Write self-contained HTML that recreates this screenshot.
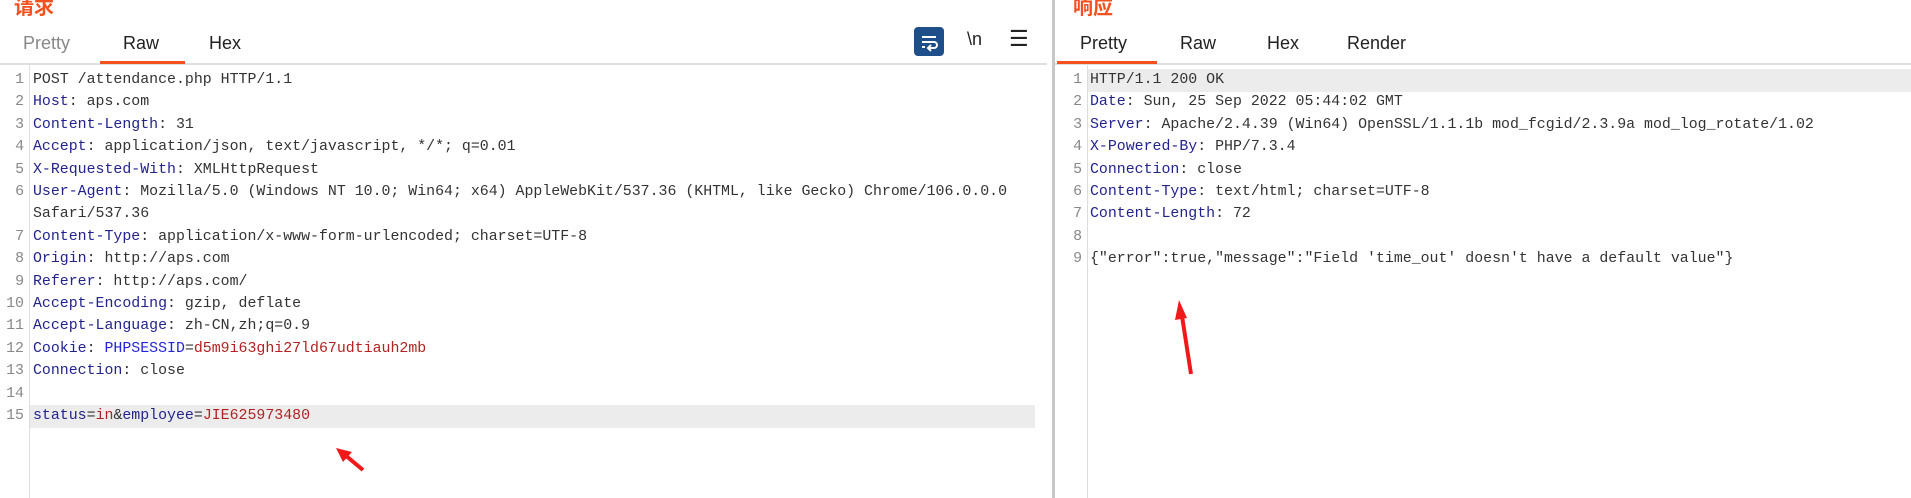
<!DOCTYPE html>
<html><head><meta charset="utf-8"><style>
*{margin:0;padding:0;box-sizing:border-box}
body{width:1911px;height:498px;background:#fff;position:relative;overflow:hidden;font-family:"Liberation Sans","Noto Sans CJK SC",sans-serif}
.t{position:absolute;font-size:18px;color:#222}
.title{position:absolute;top:-9px;font-size:20px;font-weight:bold;color:#f4511e;font-family:"Noto Sans CJK SC",sans-serif}
.ln{position:absolute;font-family:"Liberation Mono",monospace;font-size:14.9px;color:#888;text-align:right;width:24px}
.c{position:absolute;font-family:"Liberation Mono",monospace;font-size:14.9px;color:#333;white-space:pre;line-height:22px}
.k{color:#23238f}.b{color:#2525d6}.r{color:#b22222}
</style></head><body>
<div class="title" style="left:14px">请求</div>
<div class="title" style="left:1073px">响应</div>
<div class="t" style="left:23px;top:33px;color:#888">Pretty</div>
<div class="t" style="left:123px;top:33px">Raw</div>
<div class="t" style="left:209px;top:33px">Hex</div>
<div style="position:absolute;left:0;top:63px;width:1047px;height:2px;background:#dde0e4"></div>
<div style="position:absolute;left:100px;top:61px;width:85px;height:3px;background:#f4511e"></div>
<div style="position:absolute;left:914px;top:27px;width:30px;height:29px;background:#1f4f8a;border-radius:4px"></div>
<svg style="position:absolute;left:914px;top:27px" width="30" height="29"><path d="M8 10h14 M8 15h12a3 3 0 0 1 0 6h-5 M17 18l-3 3 3 3 M8 20h3" stroke="#fff" stroke-width="2" fill="none"/></svg>
<div class="t" style="left:967px;top:29px;font-size:18px;color:#222">\n</div>
<div class="t" style="left:1009px;top:26px;font-size:22px;color:#222">☰</div>
<div style="position:absolute;left:1052px;top:0;width:3px;height:498px;background:#c8c8c8"></div>
<div class="t" style="left:1080px;top:33px">Pretty</div>
<div class="t" style="left:1180px;top:33px">Raw</div>
<div class="t" style="left:1267px;top:33px">Hex</div>
<div class="t" style="left:1347px;top:33px">Render</div>
<div style="position:absolute;left:1055px;top:63px;width:856px;height:2px;background:#dde0e4"></div>
<div style="position:absolute;left:1057px;top:61px;width:100px;height:3px;background:#f4511e"></div>
<div style="position:absolute;left:29px;top:65px;width:1px;height:433px;background:#ddd"></div>
<div style="position:absolute;left:1087px;top:65px;width:1px;height:433px;background:#ddd"></div>
<div style="position:absolute;left:30px;top:405px;width:1005px;height:23px;background:#ececec"></div>
<div style="position:absolute;left:1088px;top:69px;width:823px;height:23px;background:#ececec"></div>
<div class="ln" style="left:0;top:69px;line-height:22.4px">1<br>2<br>3<br>4<br>5<br>6<br>&nbsp;<br>7<br>8<br>9<br>10<br>11<br>12<br>13<br>14<br>15</div>
<div class="c" style="left:33px;top:69px;line-height:22.4px">POST /attendance.php HTTP/1.1
<span class="k">Host</span>: aps.com
<span class="k">Content-Length</span>: 31
<span class="k">Accept</span>: application/json, text/javascript, */*; q=0.01
<span class="k">X-Requested-With</span>: XMLHttpRequest
<span class="k">User-Agent</span>: Mozilla/5.0 (Windows NT 10.0; Win64; x64) AppleWebKit/537.36 (KHTML, like Gecko) Chrome/106.0.0.0
Safari/537.36
<span class="k">Content-Type</span>: application/x-www-form-urlencoded; charset=UTF-8
<span class="k">Origin</span>: http://aps.com
<span class="k">Referer</span>: http://aps.com/
<span class="k">Accept-Encoding</span>: gzip, deflate
<span class="k">Accept-Language</span>: zh-CN,zh;q=0.9
<span class="k">Cookie</span>: <span class="b">PHPSESSID</span>=<span class="r">d5m9i63ghi27ld67udtiauh2mb</span>
<span class="k">Connection</span>: close

<span class="k">status</span>=<span class="r">in</span>&amp;<span class="k">employee</span>=<span class="r">JIE625973480</span></div>
<div class="ln" style="left:1058px;top:69px;line-height:22.4px">1<br>2<br>3<br>4<br>5<br>6<br>7<br>8<br>9</div>
<div class="c" style="left:1090px;top:69px;line-height:22.4px">HTTP/1.1 200 OK
<span class="k">Date</span>: Sun, 25 Sep 2022 05:44:02 GMT
<span class="k">Server</span>: Apache/2.4.39 (Win64) OpenSSL/1.1.1b mod_fcgid/2.3.9a mod_log_rotate/1.02
<span class="k">X-Powered-By</span>: PHP/7.3.4
<span class="k">Connection</span>: close
<span class="k">Content-Type</span>: text/html; charset=UTF-8
<span class="k">Content-Length</span>: 72

{"error":true,"message":"Field 'time_out' doesn't have a default value"}</div>
<svg style="position:absolute;left:0;top:0" width="1911" height="498">
<path d="M363 470 L345 455" stroke="#f01818" stroke-width="4"/>
<polygon points="336,448 352,452 343,462" fill="#f01818"/>
<path d="M1191 374 L1182 316" stroke="#f01818" stroke-width="4"/>
<polygon points="1179,300 1187,318 1175,320" fill="#f01818"/>
</svg>
</body></html>
